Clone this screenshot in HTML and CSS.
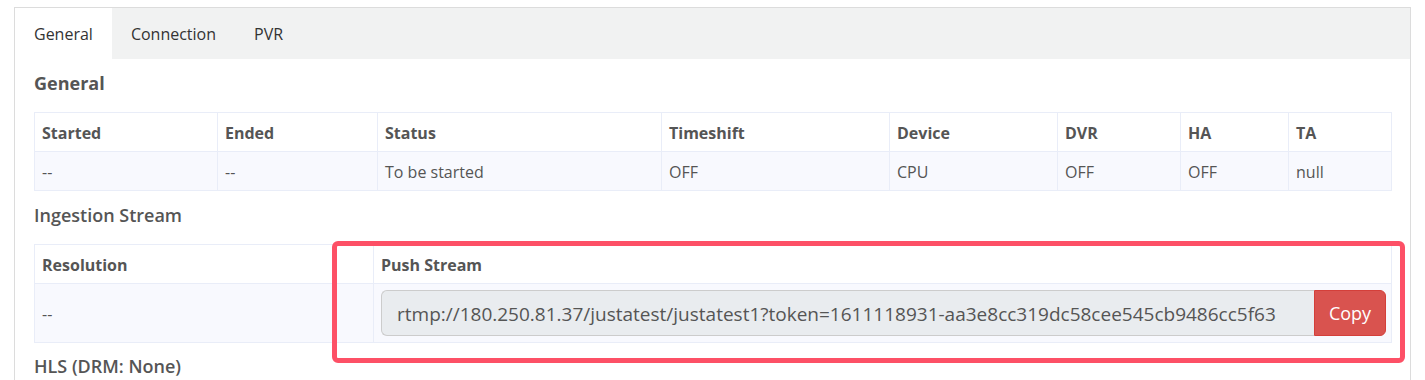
FILE: index.html
```html
<!DOCTYPE html>
<html>
<head>
<meta charset="utf-8">
<link rel="stylesheet" href="styles.css">
</head>
<body>
<div class="panel">
  <div class="tabs">
    <div class="tab active">General</div>
    <div class="tab">Connection</div>
    <div class="tab">PVR</div>
  </div>
  <div class="content">
    <h4 class="heading bold">General</h4>
    <table class="grid">
      <colgroup>
        <col style="width:183px"><col style="width:160px"><col style="width:284px"><col style="width:228px">
        <col style="width:168px"><col style="width:123px"><col style="width:108px"><col style="width:103px">
      </colgroup>
      <thead>
        <tr><th>Started</th><th>Ended</th><th>Status</th><th>Timeshift</th><th>Device</th><th>DVR</th><th>HA</th><th>TA</th></tr>
      </thead>
      <tbody>
        <tr><td>--</td><td>--</td><td>To be started</td><td>OFF</td><td>CPU</td><td>OFF</td><td>OFF</td><td>null</td></tr>
      </tbody>
    </table>
    <h4 class="heading">Ingestion Stream</h4>
    <div class="ingest">
      <table class="grid">
        <colgroup><col style="width:339px"><col style="width:1018px"></colgroup>
        <thead>
          <tr><th>Resolution</th><th>Push Stream</th></tr>
        </thead>
        <tbody>
          <tr>
            <td class="mid">--</td>
            <td class="stream">
              <div class="input-group">
                <div class="url">rtmp://180.250.81.37/justatest/justatest1?token=1611118931-aa3e8cc319dc58cee545cb9486cc5f63</div>
                <button class="copy">Copy</button>
              </div>
            </td>
          </tr>
        </tbody>
      </table>
      <div class="highlight"></div>
    </div>
    <h4 class="heading sub">HLS (DRM: None)</h4>
  </div>
</div>
</body>
</html>
```

FILE: styles.css
```css
html, body {
  margin: 0;
  padding: 0;
  background: #fff;
  overflow: hidden;
}
body {
  font-family: "Open Sans", "Noto Sans", sans-serif;
  color: #555;
  font-size: 16px;
  padding: 7px 14px 0 14px;
  height: 373px;
}
.panel {
  border: 1px solid #dcdcdc;
  border-bottom: none;
  height: 372px;
}
.tabs {
  display: flex;
  background: #f1f2f2;
  height: 51px;
}
.tab {
  padding: 2px 19px 0 19px;
  line-height: 49px;
  font-size: 16px;
  color: #333;
}
.tab.active {
  background: #fff;
}
.content {
  padding: 0 19px;
}
.heading {
  margin: 14px 0 19px 0;
  font-size: 18px;
  line-height: 20px;
  font-weight: 600;
  color: #555;
}
.heading.bold {
  font-weight: 700;
}
.heading.sub {
  margin-top: 13px;
}
.grid {
  border-collapse: collapse;
  table-layout: fixed;
  width: 1357px;
}
.grid th, .grid td {
  border: 1px solid #e9edf8;
  padding: 9px 7px 7px 7px;
  line-height: 22px;
  text-align: left;
  font-size: 16px;
  color: #555;
}
.grid th {
  font-weight: 700;
  background: #fff;
}
.grid td {
  background: #f8f9fe;
}
.grid td.mid {
  vertical-align: middle;
}
.grid td.stream {
  padding: 6px 5px 6px 7px;
}
.ingest {
  position: relative;
}
.input-group {
  display: flex;
  height: 46px;
}
.url {
  flex: 1;
  background: #e9ecef;
  border: 1px solid #ccc;
  border-right: none;
  border-radius: 6px 0 0 6px;
  padding: 2px 15px 0 15px;
  font-size: 19px;
  line-height: 42px;
  color: #555;
  white-space: nowrap;
  overflow: hidden;
}
.copy {
  width: 72px;
  background: #d9534f;
  border: 1px solid #d43f3a;
  border-radius: 0 6px 6px 0;
  color: #fff;
  font-family: "Open Sans", "Noto Sans", sans-serif;
  font-size: 18px;
  padding: 0;
}
.highlight {
  position: absolute;
  left: 298px;
  top: -3px;
  width: 1063px;
  height: 112px;
  border: 5px solid #fd5066;
  border-radius: 6px;
  pointer-events: none;
}
```
